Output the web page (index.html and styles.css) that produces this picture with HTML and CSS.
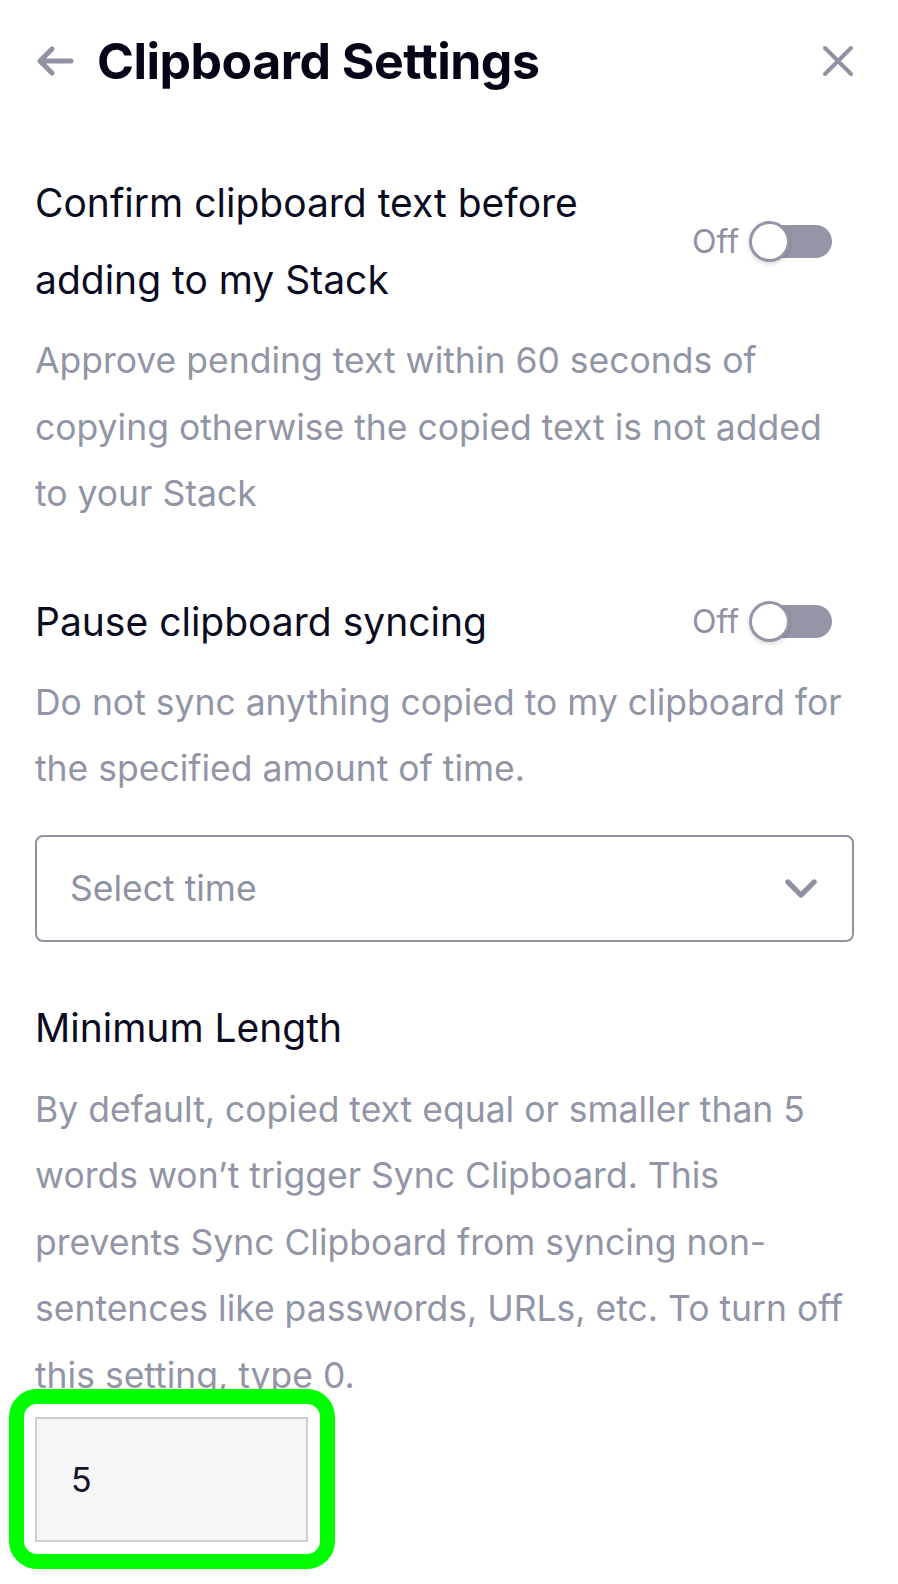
FILE: index.html
```html
<!DOCTYPE html>
<html>
<head>
<meta charset="utf-8">
<link rel="stylesheet" href="styles.css">
</head>
<body>
<div class="panel">
  <header class="header">
    <div class="header-left">
      <svg class="back" viewBox="0 0 40 32" width="40" height="32"><path d="M36 16H5M17 4L5 16l12 12" fill="none" stroke="#8e92a2" stroke-width="5" stroke-linecap="round" stroke-linejoin="round"/></svg>
      <h1 class="title">Clipboard Settings</h1>
    </div>
    <svg class="close" viewBox="0 0 32 32" width="32" height="32"><path d="M3 3L29 29M29 3L3 29" fill="none" stroke="#8e92a2" stroke-width="4" stroke-linecap="round"/></svg>
  </header>

  <section class="setting first">
    <div class="row">
      <div class="label">Confirm clipboard text before adding to my Stack</div>
      <div class="toggle-group">
        <span class="off">Off</span>
        <span class="toggle"><span class="knob"></span></span>
      </div>
    </div>
    <p class="desc">Approve pending text within 60 seconds of copying otherwise the copied text is not added to your Stack</p>
  </section>

  <section class="setting">
    <div class="row">
      <div class="label">Pause clipboard syncing</div>
      <div class="toggle-group">
        <span class="off">Off</span>
        <span class="toggle"><span class="knob"></span></span>
      </div>
    </div>
    <p class="desc">Do not sync anything copied to my clipboard for the specified amount of time.</p>
    <div class="select">
      <span class="placeholder">Select time</span>
      <svg class="chevron" viewBox="0 0 36 22" width="34" height="21"><path d="M4 4l14 14L32 4" fill="none" stroke="#8e92a2" stroke-width="5.5" stroke-linecap="round" stroke-linejoin="round"/></svg>
    </div>
  </section>

  <section class="setting last">
    <div class="row">
      <div class="label">Minimum Length</div>
    </div>
    <p class="desc">By default, copied text equal or smaller than 5 words won’t trigger Sync Clipboard. This prevents Sync Clipboard from syncing non-sentences like passwords, URLs, etc. To turn off this setting, type 0.</p>
    <div class="input-wrap">
      <div class="input">5</div>
      <div class="highlight"></div>
    </div>
  </section>
</div>
</body>
</html>
```

FILE: styles.css
```css
html, body {
  margin: 0;
  padding: 0;
  background: #ffffff;
}
body {
  font-family: "Inter", "Noto Sans", sans-serif;
  color: #0b0b1f;
}
.panel {
  width: 100%;
  box-sizing: border-box;
  padding: 0 44px 60px 35px;
}
.header {
  height: 121px;
  display: flex;
  align-items: center;
  justify-content: space-between;
}
.header-left {
  display: flex;
  align-items: center;
  gap: 22px;
}
.back {
  display: block;
}
.title {
  margin: 0;
  font-family: "Inter", sans-serif;
  font-weight: 700;
  font-size: 50px;
  letter-spacing: -0.5px;
  color: #050518;
}
.close {
  display: block;
}
.setting {
  margin-top: 55px;
}
.setting.first {
  margin-top: 43px;
}
.setting.last {
  margin-top: 47px;
}
.row {
  display: flex;
  align-items: center;
  justify-content: space-between;
}
.label {
  font-size: 39px;
  line-height: 77px;
  max-width: 640px;
  color: #0b0b1f;
}
.toggle-group {
  display: flex;
  align-items: center;
  gap: 14px;
  margin-right: 22px;
  flex-shrink: 0;
}
.off {
  font-size: 32px;
  color: #8e92a2;
}
.toggle {
  position: relative;
  display: block;
  width: 79px;
  height: 33px;
  border-radius: 17px;
  background: #9296a7;
}
.knob {
  position: absolute;
  left: -4px;
  top: -4px;
  width: 35px;
  height: 35px;
  border-radius: 50%;
  background: #ffffff;
  border: 3px solid #9296a7;
  box-shadow: 0 2px 4px rgba(0,0,0,0.15);
}
.desc {
  margin: 10px 0 0;
  font-size: 35.5px;
  line-height: 66.5px;
  color: #9195a5;
}
.setting.last .desc {
  margin-top: 11px;
}
.select {
  margin-top: 32px;
  height: 107px;
  box-sizing: border-box;
  border: 2px solid #8e92a2;
  border-radius: 8px;
  display: flex;
  align-items: center;
  justify-content: space-between;
  padding: 0 34px 0 33px;
}
.placeholder {
  font-size: 35.5px;
  color: #8e92a2;
}
.chevron {
  display: block;
}
.input-wrap {
  position: relative;
  margin-top: 8px;
  width: 273px;
}
.input {
  height: 125px;
  box-sizing: border-box;
  background: #f5f6f8;
  border: 2px solid #cfcfd3;
  padding-left: 34px;
  display: flex;
  align-items: center;
  font-size: 34px;
  color: #15152a;
}
.highlight {
  position: absolute;
  left: -26px;
  top: -28px;
  right: -27px;
  bottom: -27px;
  border: 15px solid #00ff00;
  border-radius: 28px;
}
```
